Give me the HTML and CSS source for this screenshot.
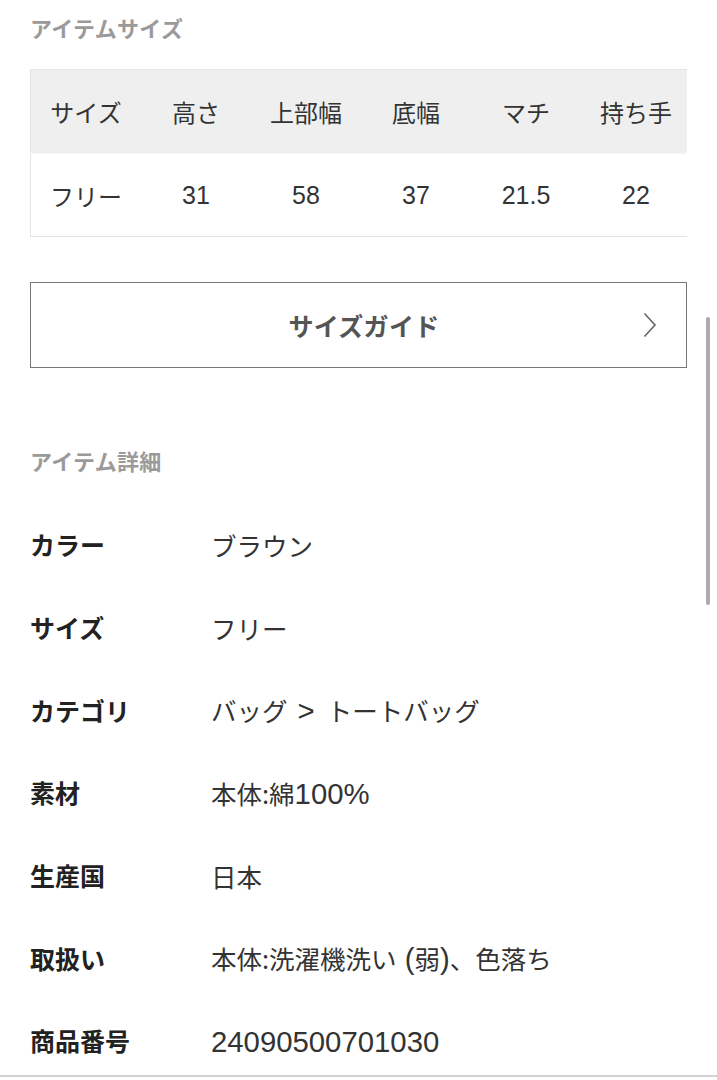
FILE: index.html
```html
<!DOCTYPE html>
<html lang="ja">
<head>
<meta charset="utf-8">
<title>アイテムサイズ</title>
<link rel="stylesheet" href="styles.css">
</head>
<body>
<main class="page">
  <h2 class="section-title">アイテムサイズ</h2>
  <div class="size-table-wrap">
    <table class="size-table">
      <thead>
        <tr><th>サイズ</th><th>高さ</th><th>上部幅</th><th>底幅</th><th>マチ</th><th>持ち手</th></tr>
      </thead>
      <tbody>
        <tr><td>フリー</td><td class="lat">31</td><td class="lat">58</td><td class="lat">37</td><td class="lat">21.5</td><td class="lat">22</td></tr>
      </tbody>
    </table>
  </div>

  <a class="guide-btn" href="#">
    <span class="guide-label">サイズガイド</span>
    <svg class="chev" width="14" height="26" viewBox="0 0 14 26"><path d="M1.5 1.5 L12 13 L1.5 24.5" fill="none" stroke="#666" stroke-width="1.6"/></svg>
  </a>

  <h2 class="section-title detail-title">アイテム詳細</h2>
  <dl class="details">
    <div class="row"><dt>カラー</dt><dd>ブラウン</dd></div>
    <div class="row"><dt>サイズ</dt><dd>フリー</dd></div>
    <div class="row"><dt>カテゴリ</dt><dd>バッグ<span class="lat gt">&gt;</span>トートバッグ</dd></div>
    <div class="row"><dt>素材</dt><dd>本体:綿<span class="lat">100%</span></dd></div>
    <div class="row"><dt>生産国</dt><dd>日本</dd></div>
    <div class="row"><dt>取扱い</dt><dd>本体:洗濯機洗い<span class="lat"> (</span>弱<span class="lat">)</span>、色落ち</dd></div>
    <div class="row"><dt>商品番号</dt><dd><span class="lat">24090500701030</span></dd></div>
  </dl>
</main>
<div class="scrollbar"></div>
<div class="bottom-bar"></div>
</body>
</html>
```

FILE: styles.css
```css
html, body {
  margin: 0;
  padding: 0;
  background: #fff;
}
body {
  font-family: "Noto Sans CJK JP", "Liberation Sans", sans-serif;
  color: #333;
  overflow: hidden;
}
.lat {
  font-family: "Liberation Sans", "Noto Sans CJK JP", sans-serif;
}
span.lat {
  font-size: 1.15em;
  line-height: 1;
}
span.gt {
  margin: 0 12px 0 10px;
}
.page {
  padding: 12px 30px 0 30px;
}
.section-title {
  margin: 0;
  font-size: 22px;
  line-height: 30px;
  font-weight: 700;
  color: #9a9a9a;
  letter-spacing: 0.3px;
}
.size-table-wrap {
  margin-top: 27px;
  overflow: hidden;
  width: 657px;
}
.size-table {
  border-collapse: collapse;
  table-layout: fixed;
  width: 660px;
  border-left: 1px solid #e4e4e4;
}
.size-table th,
.size-table td {
  width: 110px;
  padding: 0;
  text-align: center;
  font-size: 24px;
  font-weight: 400;
  color: #333;
}
.size-table td.lat {
  font-size: 25px;
}
.size-table thead tr {
  background: #efefef;
  height: 84px;
  border-top: 1px solid #e6e6e6;
}
.size-table tbody tr {
  height: 83px;
  border-top: 1px solid #f6f6f6;
  border-bottom: 1px solid #e4e4e4;
}
.guide-btn {
  margin-top: 45px;
  height: 84px;
  border: 1.5px solid #777;
  display: flex;
  align-items: center;
  justify-content: center;
  padding-left: 11px;
  position: relative;
  text-decoration: none;
}
.guide-label {
  font-size: 25px;
  font-weight: 700;
  color: #555;
  letter-spacing: 0.3px;
}
.chev {
  position: absolute;
  right: 29px;
  top: 29px;
}
.detail-title {
  margin-top: 77px;
}
.details {
  margin: 28px 0 0 0;
}
.row {
  display: grid;
  grid-template-columns: 181px 1fr;
  align-items: center;
  height: 82.7px;
}
.row dt {
  font-size: 25px;
  font-weight: 700;
  color: #222;
}
.row dd {
  margin: 0;
  font-size: 25.5px;
  color: #333;
}
.scrollbar {
  position: fixed;
  left: 706px;
  top: 317px;
  width: 4px;
  height: 288px;
  border-radius: 2px;
  background: #ababab;
}
.bottom-bar {
  position: fixed;
  left: 0;
  right: 0;
  bottom: 0;
  height: 3px;
  background: #fff;
  border-top: 2px solid #d2d2d2;
}
```
